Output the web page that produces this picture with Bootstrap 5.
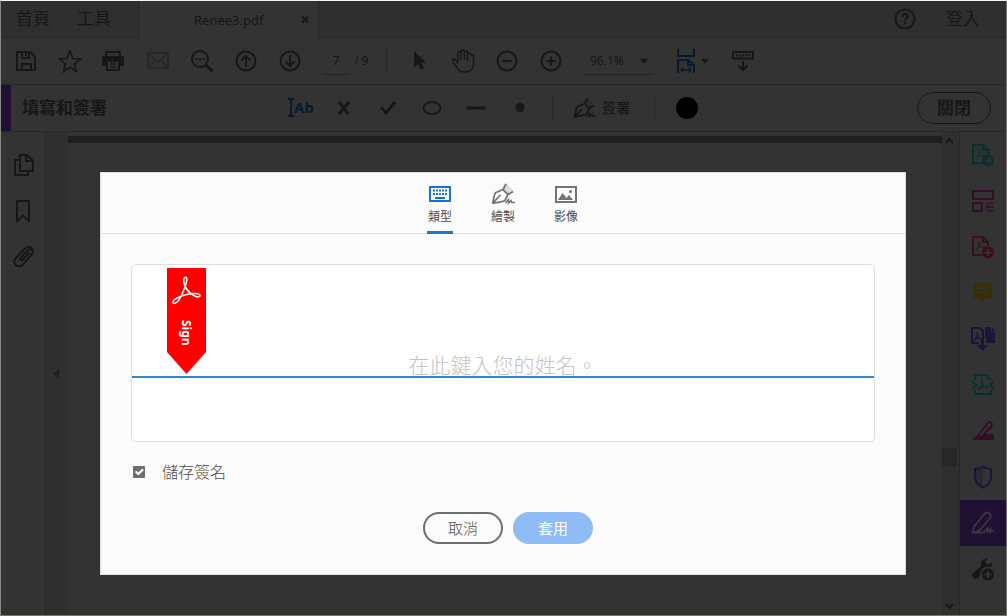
<!DOCTYPE html>
<html lang="zh-Hant">
<head>
<meta charset="utf-8">
<meta name="viewport" content="width=device-width, initial-scale=1">
<title>Renee3.pdf</title>
<link rel="stylesheet" href="https://cdn.jsdelivr.net/npm/bootstrap@5.3.0/dist/css/bootstrap.min.css">
<style>
:root { --ink:#171717; --panel:#333; --shade:#2f2f2f; --rule:#282828; --navy:#091a2f; }
body { font-family:"Noto Sans","Noto Sans CJK TC",sans-serif; color:var(--ink); background:var(--panel); font-size:12px; line-height:16px; }
svg { display:block; flex:none; fill:none; stroke:currentColor; stroke-width:2; }
button { font:inherit; color:inherit; background:none; border:0; padding:0; }
a { color:inherit; text-decoration:none; }
.app { min-height:100vh; border:1px solid #8c8886; border-top-color:#eef5f2; border-right-color:#777672; border-bottom-color:#777170; }
.tabs-row { height:37px; background:var(--shade); }
.tabs-row .top-link { font-size:17px; line-height:24px; }
.tab-start { width:137px; padding-left:15px; gap:27px; border-bottom:1px solid var(--rule); }
.tab-doc { width:181px; background:var(--panel); border:solid var(--rule); border-width:0 1px; padding:0 5px 0 55px; font-size:13px; }
.tab-end { border-bottom:1px solid var(--rule); padding-right:26px; gap:30px; }
.bar-row { height:47px; border-bottom:1px solid var(--rule); }
.tool { width:44px; height:44px; display:flex; align-items:center; justify-content:center; flex:none; }
.tool.faint { color:#252525; }
.tool.navy { color:var(--navy); }
.main-bar { padding-left:3px; }
.page-box { width:28px; height:28px; margin-left:10px; border:0; border-bottom:1px solid #242424; background:none; color:inherit; text-align:center; padding:0; }
.page-total { width:36px; padding-left:4px; }
.v-rule { width:1px; height:28px; background:#282828; flex:none; }
.after-rule { margin-left:10px; }
.zoom-wrap { width:71px; margin-left:10px; height:28px; border-bottom:1px solid #242424; position:relative; }
.zoom-wrap select { appearance:none; width:100%; height:27px; border:0; background:none; color:inherit; padding:0 0 0 7px; font:inherit; }
.zoom-wrap svg { position:absolute; right:6px; top:12px; pointer-events:none; }
.fit { margin:0 12px 0 23px; gap:6px; color:var(--navy); }
.sign-bar { padding-right:15px; }
.accent { width:10px; background:#201033; }
.sign-title { width:267px; padding-left:11px; font-size:17px; font-weight:700; }
.sign-rule { margin-left:10px; }
.sign-tool { margin:0 24px 0 20px; gap:6px; font-size:14px; font-weight:500; }
.btn-close-tool { width:74px; height:32px; border:1px solid var(--ink); border-radius:16px; font-size:17px; font-weight:700; }
.left-nav { width:45px; border-right:1px solid var(--rule); padding:10px 0 0 1px; }
.left-nav .tool { height:46px; }
.fold { width:22px; background:var(--shade); color:#202020; }
.doc-area { padding-top:4px; }
.doc-top { height:7px; background:#1f1f1f; }
.scroller { width:17px; background:var(--shade); padding:5px 2px 5px 0; }
.thumb { width:15px; height:19px; background:#272727; margin-top:167px; }
.right-nav { width:47px; border-left:1px solid var(--rule); }
.right-nav .tool { width:46px; height:46px; }
.right-nav .picked { background:#201033; color:#3b3742; }
.teal { color:#06312f; } .plum { color:#360d28; } .brick { color:#3a1012; } .olive { color:#342f04; } .indigo { color:#18163a; }
.dialog-layer { position:absolute; inset:0; padding:0 100px 0 99px; }
.sign-dialog { background:#fbfbfb; color:#4b4b4b; border:1px solid #dedede; font-weight:300; }
.mode-tabs { height:61px; border-bottom:1px solid #dcdcdc; gap:37px; }
.mode { width:26px; height:61px; padding-top:10px; border-bottom:3px solid transparent; font-size:12px; font-weight:400; color:#4b4b4b; }
.mode.active { border-color:#2076ce; }
.mode span { white-space:nowrap; line-height:16px; margin-top:4px; }
.mode svg { color:#747474; }
.mode.active svg { color:#1473d4; }
.dialog-main { padding:30px; }
.sig-box { position:relative; height:178px; border:1px solid #dcdcdc; border-radius:5px; background:#fff; }
.sig-box input { display:block; width:100%; height:113px; padding:88px 0 0; border:0; border-bottom:2px solid #3585cf; background:none; text-align:center; font-size:21px; font-weight:300; color:#4b4b4b; outline:0; }
.sig-box input::placeholder { color:#c4c4c4; opacity:1; }
.ribbon { position:absolute; left:35px; top:3px; }
.ribbon-word { font-family:"Noto Sans",sans-serif; font-size:12px; font-weight:700; fill:#fff; stroke:none; }
.save-line { margin-top:18px; padding-left:2px; gap:17px; }
.save-line .form-check-input { width:12px; height:12px; margin:0; border:0; border-radius:1px; background-color:#6e6e6e; background-size:14px; }
.save-line label { font-size:16px; line-height:24px; }
.actions { gap:10px; margin-top:28px; padding-left:10px; }
.pill { width:80px; height:32px; border-radius:16px; border:2px solid #6e6e6e; font-size:15px; line-height:24px; }
.pill.apply { background:#8fbcf4; border-color:#8fbcf4; color:#fff; font-weight:400; }
</style>
</head>
<body>
<svg width="0" height="0" class="position-absolute" aria-hidden="true">
  <symbol id="nib" viewBox="0 0 24 22">
    <path d="M1.500 20.500 C3 17 2.500 11 5 9.500 L12 6.500 L17 11.500 L14 17.500 C11 19.500 5 19 1.500 20.500 L8 13.500 M12 6.500 L15 1 M17 11.500 L22 8.500" stroke-width="1.800"/>
    <circle cx="8.800" cy="12.700" r="1.100" fill="currentColor" stroke="none"/>
    <path d="M14.500 20 L17.500 16.500 L17.500 20 L20 17.500 L20.500 19.500 H24" stroke-width="1.500"/>
    <path d="M15 0 L22 7 L17.500 10.500 L13 6 Z" fill="currentColor" stroke="none" opacity=".2"/>
  </symbol>
  <symbol id="acro" viewBox="0 0 14 14">
    <path d="M6 1 C8 1 5 9 1.500 12 C0 13.500 0 11 4.500 9.500 C8 8.500 13 8.500 13 10 C13 11.500 8 9 6 5 C5 2 5.500 1 6 1"/>
  </symbol>
</svg>
<div class="app d-flex flex-column">
  <header class="tabs-row d-flex">
    <nav class="tab-start d-flex align-items-center"><a href="#" class="top-link">首頁</a><a href="#" class="top-link">工具</a></nav>
    <div class="tab-doc d-flex align-items-center justify-content-between"><span>Renee3.pdf</span>
      <button aria-label="關閉分頁"><svg width="13" height="10"><path d="M2 1.500l6 6M8 1.500l-6 6"/></svg></button></div>
    <div class="tab-end d-flex flex-grow-1 align-items-center justify-content-end">
      <button aria-label="說明"><svg width="22" height="22"><circle cx="11" cy="11" r="9.500"/><path d="M8.500 9c0-4 5.500-3.500 5.500-1 0 2-2.800 2-2.800 4.500M11.200 14v2"/></svg></button>
      <a href="#" class="top-link">登入</a></div>
  </header>

  <div class="bar-row main-bar d-flex align-items-center">
    <button class="tool" aria-label="儲存"><svg width="22" height="22"><path d="M2 2h13l5 5v13H2zM7 20v-6h9v6M7 2v6h7V2"/><path d="M11 3v3" stroke-width="1.500"/></svg></button>
    <button class="tool" aria-label="星號"><svg width="24" height="24"><path d="M12 2l3 7.500 7.500.500-6 5 2 7.500-6.500-4.300-6.500 4.300 2-7.500-6-5 7.500-.500z" stroke-width="1.700"/></svg></button>
    <button class="tool" aria-label="列印"><svg width="24" height="22" viewBox="0 0 24 22"><path d="M4 7V2h14v5M5 11h12v9H5z"/><path d="M0 8q0-2 2-2h18q2 0 2 2v8h-4v-5H4v5H0z" fill="currentColor" stroke="none"/><path d="M8 14h6M8 17h6" stroke-width="1.300"/></svg></button>
    <button class="tool faint" aria-label="郵件"><svg width="22" height="18"><path d="M1 1h20v15H1zM1 1l10 9 10-9M1 16l7-8M21 16l-7-8" stroke-width="1.500"/></svg></button>
    <button class="tool" aria-label="搜尋"><svg width="24" height="24"><circle cx="10" cy="10" r="8"/><path d="M15.500 15.500l7 7" stroke-width="3"/><path d="M5.500 10h9" stroke-dasharray="2 1.500"/></svg></button>
    <button class="tool" aria-label="上一頁"><svg width="22" height="22"><circle cx="11" cy="11" r="9.500"/><path d="M11 17V6M6.500 10.500L11 6l4.500 4.500"/></svg></button>
    <button class="tool" aria-label="下一頁"><svg width="22" height="22"><circle cx="11" cy="11" r="9.500"/><path d="M11 5v11M6.500 11.500L11 16l4.500-4.500"/></svg></button>
    <input class="page-box" value="7" aria-label="頁碼"><span class="page-total">/ 9</span>
    <span class="v-rule"></span>
    <button class="tool after-rule" aria-label="選取"><svg width="16" height="22"><path d="M3 1v17l4-4 3 6 3-1.500-3-6h5z" fill="currentColor" stroke="none"/></svg></button>
    <button class="tool" aria-label="手形"><svg width="24" height="24"><path d="M7 13V5q0-2 1.500-2T10 5v6M10 5V3q0-2 1.700-2t1.700 2v8M13.400 4q0-2 1.600-2t1.600 2v8M16.600 6q0-2 1.700-2T20 6q3-1 2.500 3v7q-1 7-9 7-5 0-7-4L2 13q-1-3 1-3 1.500 0 4 5" stroke-width="1.500"/></svg></button>
    <button class="tool" aria-label="縮小"><svg width="22" height="22"><circle cx="11" cy="11" r="9.500"/><path d="M6.500 11h9"/></svg></button>
    <button class="tool" aria-label="放大"><svg width="22" height="22"><circle cx="11" cy="11" r="9.500"/><path d="M6.500 11h9M11 6.500v9"/></svg></button>
    <div class="zoom-wrap"><select aria-label="縮放"><option>96.1%</option></select><svg width="8" height="5"><path d="M0 0h8L4 5z" fill="currentColor" stroke="none"/></svg></div>
    <button class="fit d-flex align-items-center" aria-label="符合寬度"><svg width="18" height="24"><path d="M1 0v7h16V0M1 24V11h10l6 5v8M11 11v5h6"/><path d="M4 21h10M6.500 18.500L4 21l2.500 2.500M11.500 18.500L14 21l-2.500 2.500" stroke-width="1.500"/></svg><svg width="8" height="5"><path d="M0 0h8L4 5z" fill="currentColor" stroke="none"/></svg></button>
    <button class="tool" aria-label="閱讀模式"><svg width="22" height="22"><path d="M1 2h20v6.500H1zM11 11v9M6.500 15.500l4.500 4.500 4.500-4.500"/><path d="M4 5.200h14" stroke-dasharray="2 1"/></svg></button>
  </div>

  <div class="bar-row sign-bar d-flex align-items-center">
    <span class="accent align-self-stretch"></span>
    <span class="sign-title">填寫和簽署</span>
    <button class="tool navy" aria-label="新增文字"><svg width="26" height="20"><path d="M1 1h6M4 1v17M1 18h6" stroke-width="1.800"/><text x="7" y="15" font-family="Noto Sans" font-size="15" font-weight="700" fill="currentColor" stroke="none">Ab</text></svg></button>
    <button class="tool" aria-label="打叉"><svg width="16" height="16"><path d="M3 2l9.500 12M13 2L3 14" stroke-width="2.800"/></svg></button>
    <button class="tool" aria-label="勾選"><svg width="18" height="16"><path d="M2 7l5 6L16 2" stroke-width="2.800"/></svg></button>
    <button class="tool" aria-label="圓圈"><svg width="20" height="16"><ellipse cx="10" cy="8" rx="8.500" ry="6"/></svg></button>
    <button class="tool" aria-label="線條"><svg width="20" height="6"><path d="M2 3h16" stroke-width="3" stroke-linecap="round"/></svg></button>
    <button class="tool" aria-label="圓點"><svg width="10" height="10"><circle cx="5" cy="4.500" r="4.500" fill="currentColor" stroke="none"/></svg></button>
    <span class="v-rule sign-rule"></span>
    <button class="sign-tool d-flex align-items-center"><svg width="23" height="22"><use href="#nib"/></svg>簽署</button>
    <span class="v-rule"></span>
    <button class="tool after-rule" aria-label="顏色"><svg width="22" height="22"><circle cx="11" cy="11" r="11" fill="#000" stroke="none"/></svg></button>
    <div class="flex-grow-1 text-end"><button class="btn-close-tool">關閉</button></div>
  </div>

  <main class="d-flex flex-grow-1 position-relative">
    <nav class="left-nav">
      <button class="tool" aria-label="頁面縮圖"><svg width="20" height="24"><path d="M6 2h7l6 6v10H6zM12 2v6h7M6 7H1v15h13v-4"/></svg></button>
      <button class="tool" aria-label="書籤"><svg width="18" height="24"><path d="M2 2h12v20l-6-5.500L2 22z"/></svg></button>
      <button class="tool" aria-label="附件"><svg width="24" height="24"><path d="M9 15.500L15.500 8.500M8.500 11.500l5.500-6q3-3.500 6.500-.500t0 6l-8.500 9q-4 4-8 .500t-.500-7.500L12 4.500M20 11" stroke="none"/><path d="M17.500 7.500l-6.500 7q-1.500 1.500-2.500.500t.500-2.500l6.500-7q2.500-2.500 4.500-.500t-.500 4.500L11 19.500q-3.500 3.500-7 .500t0-7L13 3.500q3-3 6-1t1.500 5"/></svg></button>
    </nav>
    <button class="fold d-flex align-items-center justify-content-center" aria-label="收合"><svg width="8" height="10"><path d="M6 0v10L0 5z" fill="currentColor" stroke="none"/></svg></button>
    <section class="doc-area flex-grow-1"><div class="doc-top"></div></section>
    <div class="scroller d-flex flex-column align-items-center">
      <svg width="9" height="7"><path d="M1 6l3.500-4L8 6"/></svg>
      <span class="my-auto"><span class="thumb d-block"></span></span>
      <svg width="9" height="7"><path d="M1 1l3.500 4L8 1"/></svg>
    </div>
    <nav class="right-nav">
      <button class="tool teal" aria-label="轉存 PDF"><svg width="24" height="24"><path d="M11 20H2V2h10l5 5v4M12 2v5h5"/><use href="#acro" x="4" y="6" width="10" height="10" stroke-width="1.200"/><circle cx="17" cy="17.500" r="6" fill="currentColor" stroke="none"/><path d="M13.500 17.500h6M17 14.500l3 3-3 3" stroke="#333" stroke-width="1.500"/></svg></button>
      <button class="tool plum" aria-label="組織頁面"><svg width="22" height="22"><path d="M1 1h20v8H1zM1 13h9v8H1z"/><path d="M14 13.500h8M14 17h8M14 20.500h8" stroke-width="1.300"/></svg></button>
      <button class="tool brick" aria-label="建立 PDF"><svg width="24" height="24"><path d="M11 20H2V2h10l5 5v4M12 2v5h5"/><use href="#acro" x="4" y="6" width="10" height="10" stroke-width="1.200"/><circle cx="17" cy="17.500" r="6" fill="currentColor" stroke="none"/><path d="M13.500 17.500h7M17 14v7" stroke="#333"/></svg></button>
      <button class="tool olive" aria-label="註解"><svg width="22" height="22"><path d="M2 1h17q1 0 1 1v13q0 1-1 1h-5l-6 5v-5H2q-1 0-1-1V2q0-1 1-1z" fill="currentColor" stroke="none"/><path d="M5 6.500h11M5 10.500h9" stroke="#333" stroke-width="1.600"/></svg></button>
      <button class="tool indigo" aria-label="合併檔案"><svg width="24" height="26"><path d="M8 17H1V2h8l3 3v8"/><use href="#acro" x="2" y="6" width="10" height="10" stroke-width="1.500"/><path d="M14 1h6v5h4v11h-9v-5h-1zM21 1l3 4h-3zM10 13h3v6h4.500l-6 6-6-6H10z" fill="currentColor" stroke="none"/></svg></button>
      <button class="tool teal" aria-label="壓縮 PDF"><svg width="24" height="24"><path d="M4 7V2h11l5 5M4 17v4h16v-4M1 8l4 4-4 4M23 8l-4 4 4 4"/><use href="#acro" x="6" y="6" width="12" height="12" stroke-width="1.300"/></svg></button>
      <button class="tool plum" aria-label="標記密文"><svg width="22" height="22"><path d="M4 18L15 4q2-3 4-1.500t0 4L9 18zM5 16l4 1"/><path d="M11 14h11v6H0l4-4 2 2h3z" fill="currentColor" stroke="none"/></svg></button>
      <button class="tool indigo" aria-label="保護"><svg width="20" height="24"><path d="M10 1.500q4 3 8 2.500v8q0 7-8 10.500Q2 19 2 12V4q4 .500 8-2.500z"/><path d="M10 3v18Q3 18 3 12V5z" fill="currentColor" stroke="none" opacity=".3"/></svg></button>
      <button class="tool picked" aria-label="填寫和簽署"><svg width="24" height="24"><path d="M1.500 21.500l2-6.500L14 2.500q2-2 4.500 0t.500 4.500L9 19l-5 2.500zM3 21.500h10l3.500-4.500v4l3-3v3l3.500-2" stroke-width="1.800"/></svg></button>
      <button class="tool" aria-label="更多工具"><svg width="24" height="24"><path d="M1 17l9-8q-1-6 5-8h2l-3 4 3 3 4-3q1 6-5 7l-9 9q-3 2-5 0t-1-4z" fill="currentColor" stroke="none"/><circle cx="17" cy="17.500" r="7" fill="currentColor" stroke="#333"/><path d="M13.500 17.500h7M17 14v7" stroke="#333"/></svg></button>
    </nav>

    <div class="dialog-layer d-flex align-items-center">
      <section class="sign-dialog flex-grow-1" role="dialog" aria-label="簽名">
        <div class="mode-tabs d-flex justify-content-center">
          <button class="mode active d-flex flex-column align-items-center"><svg width="22" height="22"><path d="M1 4h20v14H1z"/><path d="M4 7.500h14M4 11h14" stroke-dasharray="2 1"/><path d="M6 15h10"/></svg><span>類型</span></button>
          <button class="mode d-flex flex-column align-items-center"><svg width="24" height="22"><use href="#nib"/></svg><span>繪製</span></button>
          <button class="mode d-flex flex-column align-items-center"><svg width="22" height="22"><path d="M1 4h20v15H1z"/><path d="M3 17l4.500-7 4 5 2.500-3 4 5z" fill="currentColor" stroke="none"/><circle cx="15.500" cy="8.500" r="1.500" fill="currentColor" stroke="none"/></svg><span>影像</span></button>
        </div>
        <div class="dialog-main">
          <div class="sig-box">
            <input type="text" placeholder="在此鍵入您的姓名。" aria-label="姓名">
            <svg class="ribbon" width="39" height="106"><path d="M0 0h39v84L19.500 106 0 84z" fill="#f00" stroke="none"/><path d="M18 9.500c3-1 2 5-1 12-3 8-7 14-10 14-3-1 0-5 9-8 9-3 17-2.500 17 0 0 3-8 1-13-6-4-6-4-11-2-12z" stroke="#fff" stroke-width="1.600"/><text class="ribbon-word" transform="translate(15 52) rotate(90)">Sign</text></svg>
          </div>
          <div class="save-line d-flex align-items-center"><input class="form-check-input" type="checkbox" id="save" checked><label for="save">儲存簽名</label></div>
          <div class="actions d-flex justify-content-center"><button class="pill">取消</button><button class="pill apply">套用</button></div>
        </div>
      </section>
    </div>
  </main>
</div>
<script src="https://cdn.jsdelivr.net/npm/bootstrap@5.3.0/dist/js/bootstrap.bundle.min.js"></script>
</body>
</html>
